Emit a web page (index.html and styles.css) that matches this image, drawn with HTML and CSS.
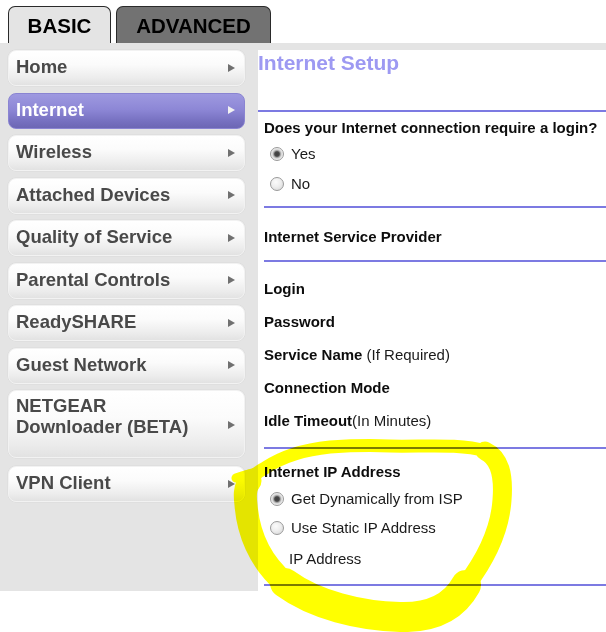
FILE: index.html
```html
<!DOCTYPE html>
<html>
<head>
<meta charset="utf-8">
<link rel="stylesheet" href="styles.css">
</head>
<body>
<div class="tabs">
  <div class="tab tab-basic">BASIC</div>
  <div class="tab tab-adv">ADVANCED</div>
</div>
<div class="main">
  <nav class="sidebar">
    <div class="navbtn"><span class="label">Home</span><span class="arrow"></span></div>
    <div class="navbtn active"><span class="label">Internet</span><span class="arrow"></span></div>
    <div class="navbtn"><span class="label">Wireless</span><span class="arrow"></span></div>
    <div class="navbtn"><span class="label">Attached Devices</span><span class="arrow"></span></div>
    <div class="navbtn"><span class="label">Quality of Service</span><span class="arrow"></span></div>
    <div class="navbtn"><span class="label">Parental Controls</span><span class="arrow"></span></div>
    <div class="navbtn"><span class="label">ReadySHARE</span><span class="arrow"></span></div>
    <div class="navbtn"><span class="label">Guest Network</span><span class="arrow"></span></div>
    <div class="navbtn tall"><span class="label">NETGEAR<br>Downloader (BETA)</span><span class="arrow"></span></div>
    <div class="navbtn"><span class="label">VPN Client</span><span class="arrow"></span></div>
  </nav>
  <section class="panel">
    <h1 class="ptitle">Internet Setup</h1>
    <div class="hline first"></div>

    <div class="sec sec-login">
      <div class="row b q">Does your Internet connection require a login?</div>
      <div class="row radio-row yes"><span class="radio checked"></span><span>Yes</span></div>
      <div class="row radio-row no"><span class="radio"></span><span>No</span></div>
    </div>
    <div class="hline"></div>

    <div class="sec sec-isp">
      <div class="row b">Internet Service Provider</div>
    </div>
    <div class="hline"></div>

    <div class="sec sec-fields">
      <div class="row b">Login</div>
      <div class="row b">Password</div>
      <div class="row"><b>Service Name</b> (If Required)</div>
      <div class="row b">Connection Mode</div>
      <div class="row"><b>Idle Timeout</b>(In Minutes)</div>
    </div>
    <div class="hline"></div>

    <div class="sec sec-ip">
      <div class="row b">Internet IP Address</div>
      <div class="row radio-row dyn"><span class="radio checked"></span><span>Get Dynamically from ISP</span></div>
      <div class="row radio-row static"><span class="radio"></span><span>Use Static IP Address</span></div>
      <div class="row sub">IP Address</div>
    </div>
    <div class="hline"></div>
  </section>
</div>

<svg class="highlight" width="606" height="632" viewBox="0 0 606 632" xmlns="http://www.w3.org/2000/svg">
  <g fill="none" stroke="#ffff00" stroke-linecap="round" stroke-linejoin="round">
    <path stroke-width="13" d="M330,447 C300,450 280,458 265,468 C250,476 243,485 246,505 C248,530 258,560 285,583 C315,605 360,616 400,617 C435,618 455,605 466,585 C485,560 500,530 502,500 C504,475 500,458 485,451 C460,443 420,447 390,446 C365,445 345,446 330,447 Z"/>
    <path stroke-width="23" d="M250,481 C244,488 245,497 246,505 C248,530 258,560 285,583"/>
    <path stroke-width="30" d="M285,583 C315,605 360,616 400,617 C435,618 455,605 466,585"/>
    <path stroke-width="19" d="M466,585 C485,560 500,530 502,500 C504,475 500,458 485,451"/>
    <path stroke-width="9" d="M268,468 C258,472 246,474 236,478"/>
  </g>
</svg>
</body>
</html>
```

FILE: styles.css
```css
html, body {
  margin: 0;
  padding: 0;
  background: #ffffff;
}
body {
  position: relative;
  width: 606px;
  height: 632px;
  overflow: hidden;
  font-family: "Liberation Sans", Arial, sans-serif;
}

.tabs {
  display: flex;
  gap: 5px;
  padding: 6px 0 0 8px;
  height: 37px;
}
.tab {
  box-sizing: border-box;
  height: 37px;
  border: 1px solid #2a2a2a;
  border-bottom: none;
  border-radius: 7px 7px 0 0;
  display: flex;
  align-items: center;
  justify-content: center;
  font-weight: bold;
  font-size: 20.5px;
  color: #000;
  padding-top: 1px;
}
.tab-basic {
  width: 103px;
  background: #e4e4e4;
}
.tab-adv {
  width: 155px;
  background: #727272;
}

.main {
  display: flex;
  background: #e4e4e4;
  height: 548px;
  padding-top: 7px;
  box-sizing: border-box;
}

.sidebar {
  width: 258px;
  flex: none;
  padding-left: 8px;
  box-sizing: border-box;
}
.navbtn {
  box-sizing: border-box;
  width: 237px;
  height: 36px;
  margin-bottom: 6.5px;
  border: 1px solid #f2f2f2;
  border-radius: 8px;
  background: linear-gradient(to bottom, #ffffff 0%, #fbfbfb 40%, #ececec 80%, #e2e2e2 100%);
  box-shadow: 0 0 0 0.5px #d9d9d9;
  display: flex;
  align-items: center;
  padding-left: 7px;
  padding-right: 9px;
  padding-bottom: 3px;
  font-weight: bold;
  font-size: 18.5px;
  color: #494949;
}
.navbtn .label {
  flex: 1;
  line-height: 21px;
}
.navbtn .arrow {
  width: 0;
  height: 0;
  margin-top: 2px;
  border-left: 7px solid #707070;
  border-top: 4px solid transparent;
  border-bottom: 4px solid transparent;
}
.navbtn.active {
  background: linear-gradient(to bottom, #9e99e0 0%, #8d87d6 45%, #7670c0 80%, #6c66b4 100%);
  border-color: #8a84d2;
  box-shadow: none;
  color: #ffffff;
}
.navbtn.active .arrow {
  border-left-color: #f2f2f2;
}
.navbtn.tall {
  height: 68px;
  margin-bottom: 8px;
  align-items: flex-start;
  padding-top: 4px;
  padding-bottom: 0;
}
.navbtn.tall .arrow {
  align-self: center;
  margin-top: -2px;
}

.panel {
  flex: 1;
  background: #ffffff;
  font-size: 15px;
  color: #1a1a1a;
}
.ptitle {
  margin: 0;
  height: 60px;
  box-sizing: border-box;
  padding-top: 1px;
  font-size: 21px;
  line-height: 24px;
  font-weight: bold;
  color: #9d99f2;
}
.hline {
  height: 2px;
  background: #7c7ae2;
  margin-left: 6px;
}
.hline.first {
  margin-left: 0;
}

.sec {
  padding-left: 6px;
  display: flex;
  flex-direction: column;
}
.row {
  height: 20px;
  line-height: 20px;
  white-space: nowrap;
}
.row b, .b {
  font-weight: bold;
  color: #0d0d0d;
}
.radio-row {
  display: flex;
  align-items: center;
  padding-left: 6px;
}
.radio {
  box-sizing: border-box;
  width: 14px;
  height: 14px;
  border-radius: 50%;
  border: 1px solid #9a9a9a;
  background: radial-gradient(circle at 40% 35%, #fbfbfb 0%, #eeeeee 45%, #d2d2d2 100%);
  margin-right: 7px;
}
.radio.checked {
  background: radial-gradient(circle at 50% 50%, #3e3e3e 0px, #4a4a4a 2.3px, #a0a0a0 3.4px, #dadada 4.6px, #f0f0f0 6px);
}

.sec-login {
  padding-top: 6px;
  padding-bottom: 12px;
}
.sec-login .yes { margin-top: 6px; }
.sec-login .no { margin-top: 10px; }

.sec-isp {
  padding-top: 19px;
  padding-bottom: 13px;
}

.sec-fields {
  padding-top: 17px;
  padding-bottom: 16px;
  gap: 13px;
}

.sec-ip {
  padding-top: 13px;
  padding-bottom: 15px;
}
.sec-ip .dyn { margin-top: 7px; }
.sec-ip .static { margin-top: 9px; }
.sec-ip .sub { margin-top: 11px; padding-left: 25px; }

.highlight {
  position: absolute;
  left: 0;
  top: 0;
  pointer-events: none;
  mix-blend-mode: multiply;
}
```
